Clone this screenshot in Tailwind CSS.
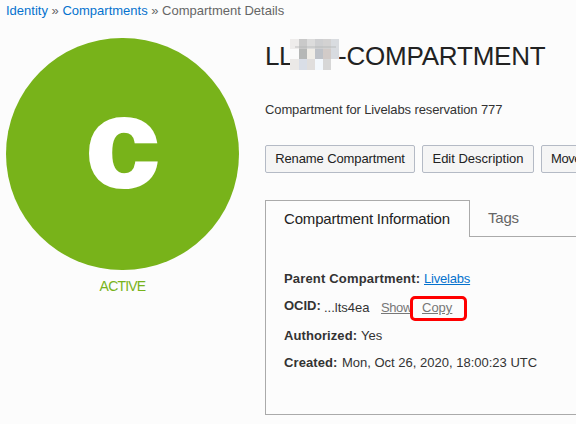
<!DOCTYPE html>
<html lang="en">
<head>
<meta charset="utf-8">
<title>Compartment Details</title>
<script src="https://cdn.jsdelivr.net/npm/@tailwindcss/browser@4"></script>
</head>
<body class="w-[576px] h-[424px] overflow-hidden bg-[#fcfcfc] font-['Liberation_Sans',Arial,sans-serif] text-[13px] leading-4 text-[#333333] whitespace-nowrap">
<nav class="h-[38px] pl-1.5 pt-[3px] text-[#666666]"><a class="text-[#0572ce]">Identity</a> » <a class="text-[#0572ce]">Compartments</a> » Compartment Details</nav>
<main class="flex">
  <aside class="w-[265px] shrink-0 pl-1.5">
    <div class="w-[233px] h-[232px] rounded-full bg-[#78b31a] flex items-center justify-center text-white">
      <span class="font-bold text-[124px] leading-[180px] h-[203px] scale-x-[1.06] [-webkit-text-stroke:4px_white]">c</span>
    </div>
    <div class="w-[233px] text-center pt-2 text-[14px] tracking-[-0.8px] text-[#78b31a]">ACTIVE</div>
  </aside>
  <section class="w-[311px] shrink-0 overflow-hidden">
    <h1 class="flex items-start h-[64px] text-[26px] leading-9 text-[#222222]">
      <span class="w-[25px] tracking-[-0.5px]">LL</span>
      <span class="relative mt-px w-[49px] h-[31px] grid grid-cols-[9px_8px_8px_8px_8px_8px] grid-rows-[10px_10px_11px]">
        <i class="bg-[#eeeceb]"></i><i class="bg-[#c9c9c9]"></i><i class="bg-[#dcdcdc]"></i><i class="bg-[#cecfd1]"></i><i class="bg-[#d3d2d2]"></i><i class="bg-[#d9dce0]"></i>
        <i class="bg-[#fbfbfb]"></i><i class="bg-[#b5b7b6]"></i><i class="bg-[#f0ede7]"></i><i class="bg-[#bec2c8]"></i><i class="bg-[#d2cbc8]"></i><i class="bg-[#d8dbe0]"></i>
        <i class="bg-[#ebe9e7]"></i><i class="bg-[#d9dee7]"></i><i class="bg-[#e0dedd]"></i><i class="bg-[#f3f8fd]"></i><i class="bg-[#d7d7d7]"></i><i class="bg-[#fcfcfc]"></i>
        <span class="absolute left-[5px] top-[7px] w-[41px] h-0.5 bg-[#b5b7b6]/40"></span>
      </span>
      <span class="-ml-px tracking-[-0.2px]">-COMPARTMENT</span>
    </h1>
    <p class="h-[43px] tracking-[-0.12px]">Compartment for Livelabs reservation 777</p>
    <div class="flex gap-[7px] h-7 text-[#222222]">
      <button class="w-[150px] shrink-0 border border-[#b4bac5] rounded-xs bg-[#f5f5f5] tracking-[-0.1px]">Rename Compartment</button>
      <button class="w-[112px] shrink-0 border border-[#b4bac5] rounded-xs bg-[#f5f5f5]">Edit Description</button>
      <button class="w-[130px] shrink-0 border border-[#b4bac5] rounded-xs bg-[#f5f5f5] text-left pl-[9px] tracking-[-0.4px]">Move</button>
    </div>
    <div class="flex h-[37px] mt-[27px] text-[15px]">
      <div class="w-[205px] border border-b-0 border-[#aaaaaa] pl-[18px] pt-[10px] tracking-[-0.18px] text-[#222222]">Compartment Information</div>
      <div class="flex-1 border-b border-[#aaaaaa] pl-[18px] pt-[10px] tracking-[-0.2px] text-[#666666]">Tags</div>
    </div>
    <div class="h-[178px] w-[340px] border border-t-0 border-[#aaaaaa] pl-[18px] pt-[34px]">
      <div class="flex gap-1 h-[29px]"><b class="w-[136px] tracking-[0.17px]">Parent Compartment:</b><a class="tracking-[-0.2px] underline text-[#0572ce]">Livelabs</a></div>
      <div class="flex h-[28px]">
        <b class="w-10 -mt-0.5">OCID:</b><span class="w-[57px]">...lts4ea</span><span class="w-[41px]"><a class="tracking-[-0.4px] underline text-[#777777]">Show</a></span>
        <a class="relative underline text-[#777777]">Copy<span class="absolute -left-[12px] -top-[4px] w-[57px] h-[25px] rounded-[5px] border-3 border-[#ff0000]"></span></a>
      </div>
      <div class="flex gap-[4px] h-[27px]"><b class="w-[73px] tracking-[0.08px]">Authorized:</b><span>Yes</span></div>
      <div class="flex gap-[4px]"><b class="w-[54px] tracking-[0.1px]">Created:</b><span>Mon, Oct 26, 2020, 18:00:23 UTC</span></div>
    </div>
  </section>
</main>
</body>
</html>
